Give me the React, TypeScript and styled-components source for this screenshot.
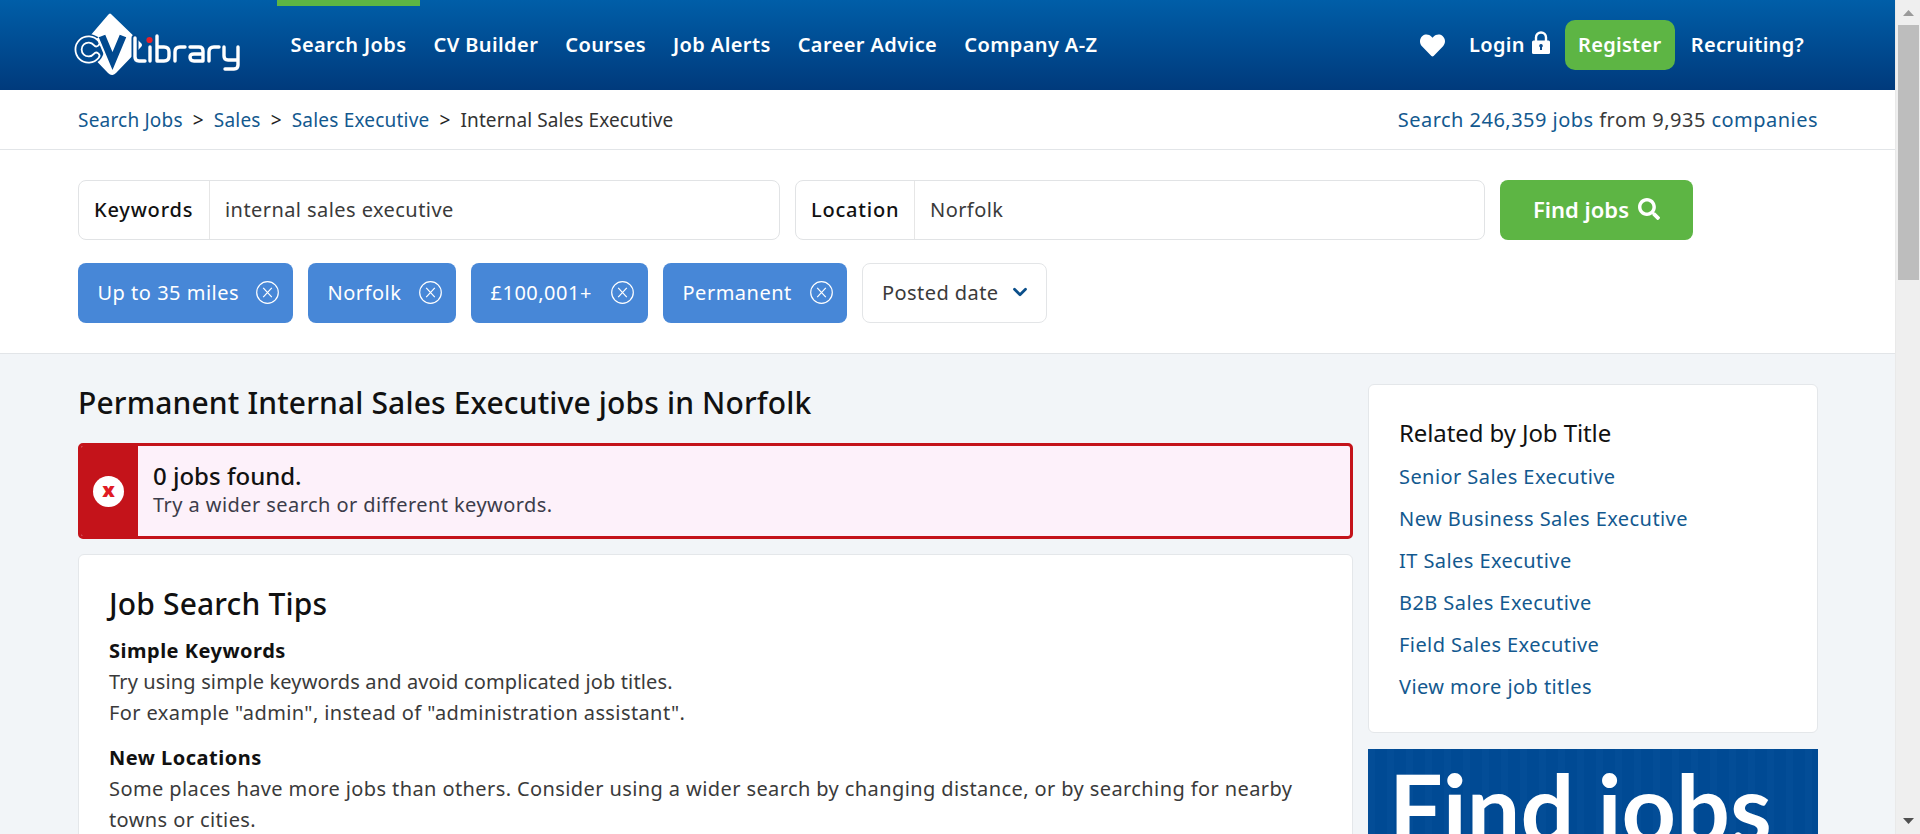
import React from "react";
import styled, { createGlobalStyle } from "styled-components";
import { FaHeart, FaSearch } from "react-icons/fa";
import { ChevronDown } from "lucide-react";

const Global = createGlobalStyle`
  html, body { margin: 0; padding: 0; height: 834px; overflow: hidden; }
  body { font-family: "Noto Sans", "Open Sans", sans-serif; font-size: 20px; letter-spacing: 0.43px; color: #333; }
  * { box-sizing: border-box; }
  a { text-decoration: none; color: inherit; }
`;

const Screen = styled.div`
  display: flex;
  width: 1920px;
  height: 834px;
  overflow: hidden;
  background: #f2f5f8;
`;
const Page = styled.div`
  flex: 1;
  min-width: 0;
  height: 834px;
  overflow: hidden;
`;
const ScrollTrack = styled.div`
  width: 25px;
  height: 834px;
  background: #efefef;
  border-left: 1px solid #e9e9e9;
  display: flex;
  flex-direction: column;
  align-items: center;
`;
const ScrollArrow = styled.svg<{ $end?: boolean }>`
  width: 11px;
  height: 6px;
  flex: none;
  margin-top: ${(p) => (p.$end ? "auto" : "10px")};
  margin-bottom: ${(p) => (p.$end ? "10px" : "9px")};
`;
const ScrollThumb = styled.div`
  width: 21px;
  height: 255px;
  background: #bdbdbd;
  flex: none;
`;

const Header = styled.header`
  height: 90px;
  background: linear-gradient(#005ea8, #003a7c);
  display: flex;
  padding: 0 77px 0 60px;
  align-items: stretch;
`;
const LogoBox = styled.a`
  width: 217px;
  flex: none;
  display: flex;
  align-items: flex-start;
`;
const Nav = styled.nav`
  display: flex;
  align-items: stretch;
`;
const NavItem = styled.a<{ $active?: boolean }>`
  padding: 0 13.5px 8px;
  font-weight: 600;
  font-size: 20px;
  letter-spacing: 0.4px;
  color: #fff;
  display: flex;
  align-items: center;
  border-top: 6px solid ${(p) => (p.$active ? "#5db544" : "transparent")};
`;
const NavRight = styled.div`
  margin-left: auto;
  display: flex;
  align-items: center;
  color: #fff;
  font-weight: 600;
  font-size: 20px;
  letter-spacing: 0.3px;
`;
const HeartIcon = styled(FaHeart)`
  width: 25px;
  height: 25px;
  margin-right: 24px;
`;
const LoginLink = styled.a`
  padding-bottom: 2px;
`;
const LockIcon = styled.svg`
  width: 18px;
  height: 23px;
  margin: 0 15px 6px 7px;
  flex: none;
`;
const RegisterButton = styled.a`
  width: 110px;
  height: 50px;
  background: #5db544;
  border-radius: 10px;
  display: flex;
  align-items: center;
  justify-content: center;
  margin-right: 16px;
  padding-bottom: 2px;
`;
const Recruiting = styled.a`
  margin-right: 14px;
  padding-bottom: 2px;
`;

const CrumbBar = styled.div`
  height: 60px;
  background: #fff;
  border-bottom: 1px solid #e2e5e8;
  display: flex;
  align-items: center;
  justify-content: space-between;
  padding: 0 77px 0 78px;
`;
const Crumbs = styled.div`
  display: flex;
  align-items: center;
  gap: 10px;
  font-size: 19px;
  letter-spacing: 0.2px;
`;
const BlueLink = styled.a`
  color: #13598f;
`;
const Sep = styled.span`
  color: #222;
`;
const Plain = styled.span`
  color: #333;
  letter-spacing: 0.1px;
`;
const Stats = styled.div`
  color: #3a3a3a;
  font-size: 20px;
  letter-spacing: 0.47px;
`;

const SearchSection = styled.section`
  background: #fff;
  border-bottom: 1px solid #e2e5e8;
  height: 204px;
  padding: 30px 77px 0 78px;
`;
const SearchRow = styled.div`
  display: flex;
  gap: 15px;
  height: 60px;
`;
const Field = styled.div<{ $w: number }>`
  width: ${(p) => p.$w}px;
  flex: none;
  border: 1px solid #e1e3e5;
  border-radius: 8px;
  display: flex;
  align-items: center;
  background: #fff;
`;
const FieldLabel = styled.label<{ $w: number }>`
  width: ${(p) => p.$w}px;
  flex: none;
  height: 100%;
  display: flex;
  align-items: center;
  padding: 0 0 2px 15px;
  font-weight: 500;
  letter-spacing: 0.8px;
  color: #111;
  border-right: 1px solid #e6e6e6;
`;
const FieldValue = styled.span`
  padding: 0 0 2px 15px;
  color: #3a3a3a;
`;
const FindButton = styled.a`
  width: 193px;
  background: #5db544;
  color: #fff;
  border-radius: 8px;
  font-weight: 600;
  font-size: 22px;
  letter-spacing: 0;
  display: flex;
  align-items: center;
  justify-content: center;
  gap: 9px;
  padding-bottom: 2px;
`;
const FilterRow = styled.div`
  display: flex;
  gap: 15px;
  height: 60px;
  margin-top: 23px;
`;
const Chip = styled.a<{ $w: number }>`
  width: ${(p) => p.$w}px;
  background: #4787d7;
  color: #fff;
  border-radius: 8px;
  display: flex;
  align-items: center;
  justify-content: space-between;
  padding: 0 14px 2px 19.5px;
  letter-spacing: 0.5px;
`;
const ChipClose = styled.svg`
  width: 23px;
  height: 23px;
  flex: none;
`;
const DateFilter = styled.a`
  width: 185px;
  border: 1px solid #e3e5e7;
  border-radius: 8px;
  background: #fff;
  display: flex;
  align-items: center;
  padding: 0 0 2px 19px;
  gap: 10px;
  color: #3a3a3a;
`;

const Main = styled.div`
  display: grid;
  grid-template-columns: 1275px 450px;
  gap: 15px;
  padding: 0 77px 0 78px;
`;
const LeftColumn = styled.div`
  padding-top: 27px;
`;
const PageTitle = styled.h1`
  margin: 0 0 18px;
  font-size: 30px;
  line-height: 44px;
  font-weight: 500;
  letter-spacing: 0.15px;
  color: #111;
`;
const Alert = styled.div`
  height: 96px;
  border: 3px solid #c4131a;
  border-radius: 5px;
  background: #fdf1fa;
  display: flex;
  overflow: hidden;
`;
const AlertSide = styled.div`
  width: 57px;
  flex: none;
  background: #c4131a;
  display: flex;
  align-items: center;
  justify-content: center;
  padding-right: 2px;
`;
const AlertBadge = styled.span`
  width: 31px;
  height: 31px;
  border-radius: 50%;
  background: #fff;
  color: #e01b24;
  font-weight: 900;
  font-size: 20px;
  letter-spacing: 0;
  line-height: 27px;
  text-align: center;
`;
const AlertBody = styled.div`
  padding: 13px 15px;
`;
const AlertTitle = styled.div`
  font-size: 24px;
  font-weight: 500;
  line-height: 33px;
  letter-spacing: 0;
  color: #111;
`;
const AlertText = styled.div`
  font-size: 20px;
  line-height: 26px;
  color: #3c3c4a;
`;
const Card = styled.div`
  background: #fff;
  border: 1px solid #e4e7ea;
  border-radius: 6px;
`;
const TipsCard = styled(Card)`
  margin-top: 15px;
  padding: 27px 30px 30px;
`;
const TipsTitle = styled.h2`
  margin: 0 0 9px;
  font-size: 30px;
  line-height: 44px;
  font-weight: 500;
  letter-spacing: 0.15px;
  color: #111;
`;
const TipTitle = styled.div`
  font-weight: 700;
  letter-spacing: 0.5px;
  color: #111;
  line-height: 31px;
`;
const TipText = styled.p`
  margin: 0 0 14px;
  line-height: 31px;
  letter-spacing: 0.4px;
  color: #3a3a3a;
`;
const TightLine = styled.span`
  letter-spacing: 0.14px;
`;
const Side = styled.aside`
  padding-top: 30px;
`;
const RelatedCard = styled(Card)`
  height: 349px;
  padding: 30px;
`;
const RelatedTitle = styled.div`
  font-size: 24px;
  line-height: 36px;
  letter-spacing: -0.1px;
  color: #111;
  margin-bottom: 5px;
`;
const RelatedLink = styled.a`
  display: block;
  line-height: 42px;
  color: #13598f;
`;
const Banner = styled.div`
  margin-top: 16px;
  height: 300px;
  background:
    repeating-linear-gradient(90deg, rgba(255,255,255,0.012) 0 7px, rgba(0,0,0,0.015) 7px 19px),
    #004b96;
  color: #fff;
  font-family: "Lato", sans-serif;
  font-weight: 700;
  font-size: 95px;
  letter-spacing: 0;
  line-height: 100px;
  padding: 8px 0 0 21px;
  white-space: nowrap;
`;

const Logo = () => (
  <svg width="200" height="90" viewBox="0 0 200 90" role="img" aria-label="CV-Library">
    <path d="M52 15 L81 43 Q83 45 81 47 L56 73 Q52 77 48 73 L24 48 Q22 45 24 43 L48 15 Q50 12 52 15Z" fill="#fff" />
    <circle cx="28.5" cy="49.5" r="15.5" fill="#01498f" />
    <path d="M36.3 43.2 A10 10 0 1 0 36.3 55.8" fill="none" stroke="#fff" strokeWidth="8" strokeLinecap="round" />
    <path d="M36.3 43.2 A10 10 0 1 0 36.3 55.8" fill="none" stroke="#01498f" strokeWidth="4.4" strokeLinecap="round" />
    <path d="M42 36 L52.5 61 L63 36" fill="none" stroke="#fff" strokeWidth="11" />
    <path d="M42 36 L52.5 61 L63 36" fill="none" stroke="#01498f" strokeWidth="7" />
    <path d="M75 38 V57 Q75 61 79 61 H85" fill="none" stroke="#01498f" strokeWidth="7" strokeLinecap="round" strokeLinejoin="round" />
    <g fill="none" stroke="#fff" strokeWidth="3.4" strokeLinecap="round" strokeLinejoin="round">
      <path d="M75 38 V57 Q75 61 79 61 H85" />
      <path d="M90 47 V61" />
      <path d="M97 36 V61 H104 Q109 61 109 56 V52 Q109 47 104 47 H97" />
      <path d="M115 61 V52 Q115 47 120 47 H125" />
      <path d="M130 47 H139 Q143 47 143 51 V61 H134 Q130 61 130 57 Q130 54 134 54 H143" />
      <path d="M149 61 V52 Q149 47 154 47 H159" />
      <path d="M164 47 V56 Q164 60 168 60 H178 M178 47 V65 Q178 69 174 69 H165" />
    </g>
    <circle cx="89.5" cy="40" r="3.1" fill="#e3202b" />
  </svg>
);

const Close = () => (
  <ChipClose viewBox="0 0 23 23" fill="none" stroke="#fff" strokeWidth="1.2">
    <circle cx="11.5" cy="11.5" r="10.8" />
    <path d="M7.2 6.8 L15.8 16.2 M15.8 6.8 L7.2 16.2" />
  </ChipClose>
);

const jobTitles = ["Senior Sales Executive", "New Business Sales Executive", "IT Sales Executive", "B2B Sales Executive", "Field Sales Executive", "View more job titles"];
const chips = [
  { label: "Up to 35 miles", width: 215 },
  { label: "Norfolk", width: 148 },
  { label: "£100,001+", width: 177 },
  { label: "Permanent", width: 184 },
];

export default function App() {
  return (
    <>
      <Global />
      <Screen>
        <Page>
          <Header>
            <LogoBox><Logo /></LogoBox>
            <Nav>
              <NavItem $active>Search Jobs</NavItem>
              <NavItem>CV Builder</NavItem>
              <NavItem>Courses</NavItem>
              <NavItem>Job Alerts</NavItem>
              <NavItem>Career Advice</NavItem>
              <NavItem>Company A-Z</NavItem>
            </Nav>
            <NavRight>
              <HeartIcon />
              <LoginLink>Login</LoginLink>
              <LockIcon viewBox="0 0 18 23">
                <path d="M4 10 V6.5 A5 5 0 0 1 14 6.5 V10" fill="none" stroke="#fff" strokeWidth="2.4" />
                <rect x="0" y="9.5" width="18" height="13.5" rx="1.5" fill="#fff" />
                <path d="M9 13 a1.8 1.8 0 0 1 1 3.3 V19 H8 V16.3 A1.8 1.8 0 0 1 9 13Z" fill="#0a4a8c" />
              </LockIcon>
              <RegisterButton>Register</RegisterButton>
              <Recruiting>Recruiting?</Recruiting>
            </NavRight>
          </Header>
          <CrumbBar>
            <Crumbs>
              <BlueLink>Search Jobs</BlueLink>
              <Sep>&gt;</Sep>
              <BlueLink>Sales</BlueLink>
              <Sep>&gt;</Sep>
              <BlueLink>Sales Executive</BlueLink>
              <Sep>&gt;</Sep>
              <Plain>Internal Sales Executive</Plain>
            </Crumbs>
            <Stats>
              <BlueLink>Search 246,359 jobs</BlueLink> from 9,935 <BlueLink>companies</BlueLink>
            </Stats>
          </CrumbBar>
          <SearchSection>
            <SearchRow>
              <Field $w={702}>
                <FieldLabel $w={131}>Keywords</FieldLabel>
                <FieldValue>internal sales executive</FieldValue>
              </Field>
              <Field $w={690}>
                <FieldLabel $w={119}>Location</FieldLabel>
                <FieldValue>Norfolk</FieldValue>
              </Field>
              <FindButton>Find jobs <FaSearch size={22} /></FindButton>
            </SearchRow>
            <FilterRow>
              {chips.map((c) => (
                <Chip key={c.label} $w={c.width}>{c.label}<Close /></Chip>
              ))}
              <DateFilter>Posted date <ChevronDown size={22} strokeWidth={3} color="#0b4f8a" /></DateFilter>
            </FilterRow>
          </SearchSection>
          <Main>
            <LeftColumn>
              <PageTitle>Permanent Internal Sales Executive jobs in Norfolk</PageTitle>
              <Alert>
                <AlertSide><AlertBadge>x</AlertBadge></AlertSide>
                <AlertBody>
                  <AlertTitle>0 jobs found.</AlertTitle>
                  <AlertText>Try a wider search or different keywords.</AlertText>
                </AlertBody>
              </Alert>
              <TipsCard>
                <TipsTitle>Job Search Tips</TipsTitle>
                <TipTitle>Simple Keywords</TipTitle>
                <TipText>
                  <TightLine>Try using simple keywords and avoid complicated job titles.</TightLine><br />
                  For example "admin", instead of "administration assistant".
                </TipText>
                <TipTitle>New Locations</TipTitle>
                <TipText>
                  Some places have more jobs than others. Consider using a wider search by changing distance, or by searching for nearby towns or cities.
                </TipText>
              </TipsCard>
            </LeftColumn>
            <Side>
              <RelatedCard>
                <RelatedTitle>Related by Job Title</RelatedTitle>
                {jobTitles.map((t) => <RelatedLink key={t}>{t}</RelatedLink>)}
              </RelatedCard>
              <Banner>Find jobs</Banner>
            </Side>
          </Main>
        </Page>
        <ScrollTrack>
          <ScrollArrow viewBox="0 0 11 6"><path d="M5.5 0 L11 6 H0Z" fill="#9a9a9a" /></ScrollArrow>
          <ScrollThumb />
          <ScrollArrow $end viewBox="0 0 11 6"><path d="M0 0 H11 L5.5 6Z" fill="#505050" /></ScrollArrow>
        </ScrollTrack>
      </Screen>
    </>
  );
}
